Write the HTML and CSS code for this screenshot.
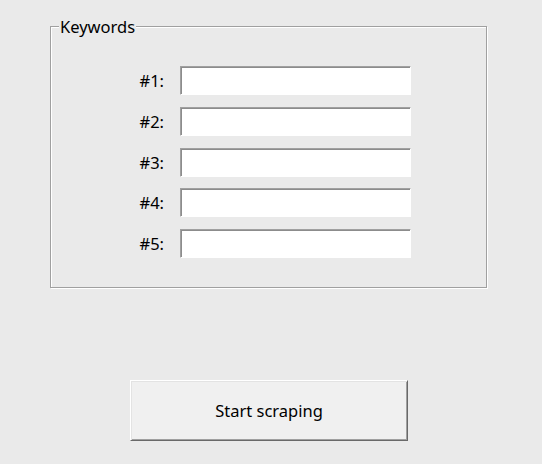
FILE: index.html
```html
<!doctype html>
<html lang="en">
<head>
  <meta charset="UTF-8">
  <meta name="viewport" content="width=device-width, initial-scale=1.0">
  <title>Scraper</title>
  <link rel="stylesheet" href="styles.css">
</head>
<body>
  <div class="group">
    <span class="group-title">Keywords</span>
    <div class="rows">
      <label class="row-label" for="kw1">#1:</label>
      <input class="entry" type="text" id="kw1">
      <label class="row-label" for="kw2">#2:</label>
      <input class="entry" type="text" id="kw2">
      <label class="row-label" for="kw3">#3:</label>
      <input class="entry" type="text" id="kw3">
      <label class="row-label" for="kw4">#4:</label>
      <input class="entry" type="text" id="kw4">
      <label class="row-label" for="kw5">#5:</label>
      <input class="entry" type="text" id="kw5">
    </div>
  </div>
  <button class="start-btn" id="start-btn">Start scraping</button>
</body>
</html>
```

FILE: styles.css
```css
body {
  margin: 0;
  background: #eaeaea;
  font-family: "Noto Sans", "Open Sans", sans-serif;
  font-size: 16.5px;
  color: #000;
}
.group {
  position: relative;
  box-sizing: border-box;
  width: 437px;
  height: 262px;
  margin: 26px 0 0 50px;
  border: 1px solid #a0a0a0;
  box-shadow: inset 1px 1px 0 #fff, 1px 1px 0 #fff;
}
.group-title {
  position: absolute;
  top: -11px;
  left: 8px;
  padding: 0 1px;
  background: #eaeaea;
  line-height: 22px;
}
.rows {
  display: grid;
  grid-template-columns: 113px 231px;
  column-gap: 16px;
  row-gap: 11.75px;
  padding-top: 39px;
}
.row-label {
  text-align: right;
  line-height: 29px;
}
.entry {
  box-sizing: border-box;
  height: 29px;
  margin: 0;
  padding: 0 4px;
  background: #fff;
  border: 1px solid;
  border-color: #a0a0a0 #fff #fff #a0a0a0;
  box-shadow: inset 1px 1px 0 #8c8c8c;
  outline: none;
  font: inherit;
}
.start-btn {
  display: block;
  box-sizing: border-box;
  width: 278px;
  height: 61px;
  margin: 92px 0 0 130px;
  padding: 0;
  background: #f0f0f0;
  border: 1px solid;
  border-color: #fff #696969 #696969 #fff;
  box-shadow: inset 1px 1px 0 #e3e3e3, inset -1px -1px 0 #a0a0a0;
  font: inherit;
  color: #000;
  cursor: pointer;
}
```
